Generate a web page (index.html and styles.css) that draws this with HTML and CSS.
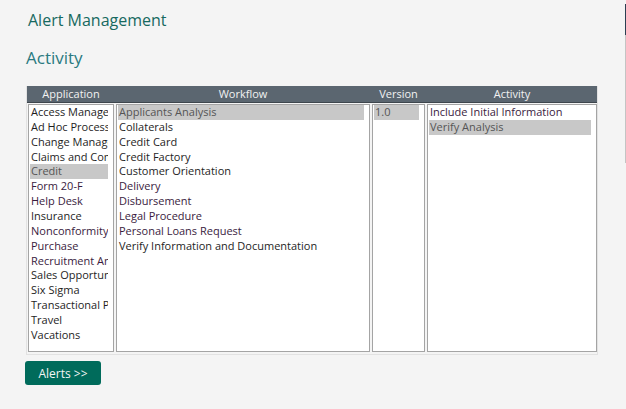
FILE: index.html
```html
<!DOCTYPE html>
<html lang="en">
<head>
<meta charset="utf-8">
<title>Alert Management</title>
<link rel="stylesheet" href="styles.css">
</head>
<body>
<div class="page">
  <main class="content">
    <h1 class="app-title">Alert Management</h1>
    <h2 class="section-title">Activity</h2>
    <div class="panel">
      <div class="grid-head">
        <div class="col-label">Application</div>
        <div class="col-label">Workflow</div>
        <div class="col-label">Version</div>
        <div class="col-label">Activity</div>
      </div>
      <div class="grid-body">
        <ul class="list">
          <li class="item">Access Management</li>
          <li class="item">Ad Hoc Process</li>
          <li class="item">Change Management</li>
          <li class="item">Claims and Complaints</li>
          <li class="item selected">Credit</li>
          <li class="item visited">Form 20-F</li>
          <li class="item visited">Help Desk</li>
          <li class="item">Insurance</li>
          <li class="item visited">Nonconformity</li>
          <li class="item visited">Purchase</li>
          <li class="item visited">Recruitment Analysis</li>
          <li class="item">Sales Opportunity</li>
          <li class="item">Six Sigma</li>
          <li class="item">Transactional Process</li>
          <li class="item">Travel</li>
          <li class="item">Vacations</li>
        </ul>
        <ul class="list">
          <li class="item selected">Applicants Analysis</li>
          <li class="item">Collaterals</li>
          <li class="item">Credit Card</li>
          <li class="item">Credit Factory</li>
          <li class="item">Customer Orientation</li>
          <li class="item visited">Delivery</li>
          <li class="item visited">Disbursement</li>
          <li class="item visited">Legal Procedure</li>
          <li class="item visited">Personal Loans Request</li>
          <li class="item">Verify Information and Documentation</li>
        </ul>
        <ul class="list">
          <li class="item selected">1.0</li>
        </ul>
        <ul class="list">
          <li class="item visited">Include Initial Information</li>
          <li class="item selected">Verify Analysis</li>
        </ul>
      </div>
    </div>
    <button class="btn" type="button">Alerts &gt;&gt;</button>
  </main>
  <div class="edge-strip">
    <div class="edge-dark"></div>
    <div class="edge-grey"></div>
  </div>
</div>
</body>
</html>
```

FILE: styles.css
```css
* { box-sizing: border-box; }
html, body { margin: 0; padding: 0; }
body {
  background: #f4f4f4;
  font-family: "Open Sans", "Liberation Sans", sans-serif;
  color: #222;
  height: 409px;
  overflow: hidden;
}
.page {
  display: flex;
  height: 409px;
}
.content {
  flex: 1;
  padding: 9px 0 0 26px;
}
.app-title {
  margin: 0 0 0 2px;
  font-size: 16px;
  line-height: 22px;
  font-weight: 400;
  color: #17695f;
}
.section-title {
  margin: 15px 0 0 0;
  font-size: 17px;
  line-height: 24px;
  font-weight: 400;
  color: #2a7a80;
}
.panel {
  margin-top: 16px;
  width: 572px;
  border: 1px solid #e2e2e2;
  border-top: none;
  background: #f4f4f4;
}
.grid-head,
.grid-body {
  display: grid;
  grid-template-columns: 86px 254px 53px 170px;
  column-gap: 2px;
}
.grid-head {
  background: #5b6670;
  border-bottom: 1px solid #3e464d;
  height: 17px;
  padding: 0 1px;
}
.col-label {
  color: #f2f2f2;
  font-size: 11px;
  line-height: 16px;
  text-align: center;
}
.grid-body {
  padding: 1px 1px 2px 1px;
}
.list {
  list-style: none;
  margin: 0;
  height: 248px;
  padding: 0 5px 1px 1px;
  background: #fff;
  border: 1px solid #a4a4a4;
  overflow: hidden;
}
.item {
  font-size: 11px;
  line-height: 14.87px;
  height: 14.87px;
  padding-left: 1px;
  white-space: nowrap;
  overflow: hidden;
  color: #1e1e1e;
}
.item.visited { color: #3a1c3e; }
.item.selected {
  background: #c8c8c8;
  color: #555;
}
.btn {
  margin-top: 6px;
  margin-left: -1px;
  width: 76px;
  height: 24px;
  border: none;
  border-radius: 3px;
  background: #006b5b;
  color: #f4f4f4;
  font-family: "Open Sans", "Liberation Sans", sans-serif;
  font-size: 12px;
  padding: 0;
}
.edge-strip {
  width: 1px;
  display: flex;
  flex-direction: column;
  padding-top: 4px;
}
.edge-dark {
  height: 31px;
  background: #2b3f52;
}
.edge-grey {
  height: 128px;
  background: #c4c4c4;
}
```
